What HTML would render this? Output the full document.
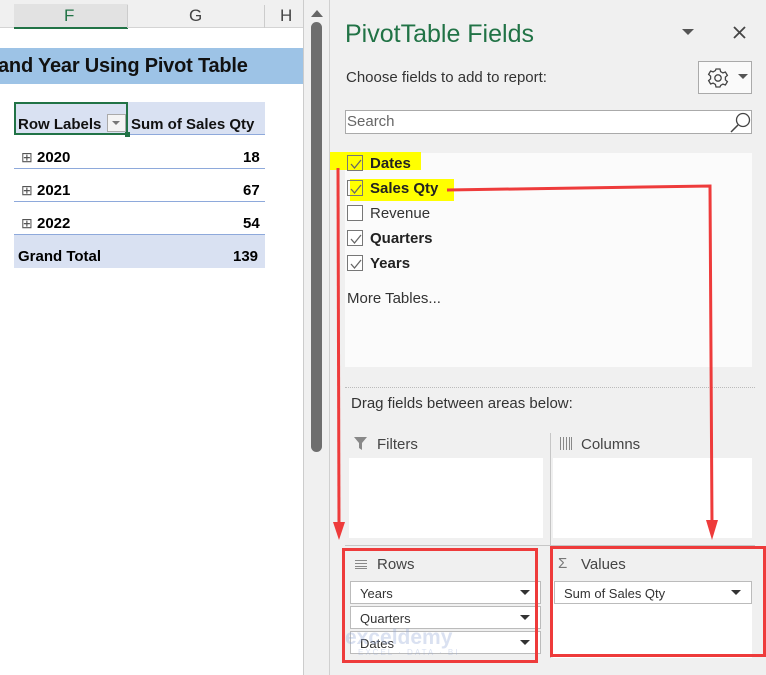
<!DOCTYPE html>
<html><head><meta charset="utf-8"><style>
*{margin:0;padding:0;box-sizing:border-box}
body{width:766px;height:675px;position:relative;overflow:hidden;background:#fff;font-family:"Liberation Sans",Arial,sans-serif}
.a{position:absolute}
.t{position:absolute;white-space:nowrap}
.cb{position:absolute;width:16px;height:16px;border:1px solid #777;background:#fff}
.ck{position:absolute;left:2px;top:2px}
.dd{position:absolute;height:23px;border:1px solid #bbb;background:#fff;font-size:13px;color:#333;padding:4px 0 0 9px}
.dd:after{content:"";position:absolute;right:10px;top:8px;border-left:5px solid transparent;border-right:5px solid transparent;border-top:5px solid #333}
</style></head><body>
<!-- sheet -->
<div class="a" style="left:0;top:0;width:303px;height:28px;background:#f0f0f0;border-bottom:1px solid #d4d4d4"></div>
<div class="a" style="left:14px;top:4px;width:114px;height:25px;background:#e2e2e2;border-bottom:2px solid #217346"></div>
<div class="a" style="left:127px;top:5px;width:1px;height:23px;background:#ccc"></div>
<div class="a" style="left:264px;top:5px;width:1px;height:23px;background:#ccc"></div>
<div class="t" style="left:64px;top:6px;font-size:17px;color:#217346">F</div>
<div class="t" style="left:189px;top:6px;font-size:17px;color:#444">G</div>
<div class="t" style="left:280px;top:6px;font-size:17px;color:#444">H</div>
<div class="a" style="left:0;top:48px;width:303px;height:36px;background:#9dc3e6"></div>
<div class="t" style="left:-2px;top:55px;font-size:20px;font-weight:bold;color:#111;letter-spacing:-0.2px">and Year Using Pivot Table</div>
<div class="a" style="left:14px;top:102px;width:251px;height:33px;background:#d9e1f2;border-bottom:1px solid #8ea9db"></div>
<div class="a" style="left:14px;top:102px;width:114px;height:33px;border:2px solid #217346"></div>
<div class="a" style="left:125px;top:132px;width:5px;height:5px;background:#217346"></div>
<div class="a" style="left:107px;top:114px;width:19px;height:18px;border:1px solid #aaa;background:#f4f4f4"></div>
<div class="a" style="left:112px;top:121px;border-left:4px solid transparent;border-right:4px solid transparent;border-top:4px solid #777"></div>
<div class="t" style="left:18px;top:116px;font-size:15px;font-weight:bold;color:#111">Row Labels</div>
<div class="t" style="left:131px;top:116px;font-size:15px;font-weight:bold;color:#111">Sum of Sales Qty</div>
<div class="a" style="left:14px;top:168px;width:251px;height:1px;background:#8ea9db"></div>
<div class="a" style="left:14px;top:201px;width:251px;height:1px;background:#8ea9db"></div>
<div class="a" style="left:14px;top:234px;width:251px;height:34px;background:#d9e1f2;border-top:1px solid #8ea9db"></div>
<div class="t" style="left:21px;top:149px;font-size:14px;color:#555">⊞</div><div class="t" style="left:37px;top:149px;font-size:15px;font-weight:bold">2020</div><div class="t" style="left:243px;top:149px;font-size:15px;font-weight:bold">18</div>
<div class="t" style="left:21px;top:182px;font-size:14px;color:#555">⊞</div><div class="t" style="left:37px;top:182px;font-size:15px;font-weight:bold">2021</div><div class="t" style="left:243px;top:182px;font-size:15px;font-weight:bold">67</div>
<div class="t" style="left:21px;top:215px;font-size:14px;color:#555">⊞</div><div class="t" style="left:37px;top:215px;font-size:15px;font-weight:bold">2022</div><div class="t" style="left:243px;top:215px;font-size:15px;font-weight:bold">54</div>
<div class="t" style="left:18px;top:248px;font-size:15px;font-weight:bold">Grand Total</div><div class="t" style="left:233px;top:248px;font-size:15px;font-weight:bold">139</div>
<!-- scrollbar -->
<div class="a" style="left:303px;top:0;width:27px;height:675px;background:#f0f0f0;border-left:1px solid #ccc"></div>
<div class="a" style="left:311px;top:10px;border-left:6px solid transparent;border-right:6px solid transparent;border-bottom:7px solid #666"></div>
<div class="a" style="left:311px;top:22px;width:11px;height:430px;background:#6e6e6e;border-radius:6px"></div>
<div class="a" style="left:329px;top:0;width:1px;height:675px;background:#d0d0d0"></div>
<!-- pane -->
<div class="a" style="left:330px;top:0;width:436px;height:675px;background:#f0f0f0"></div>
<div class="t" style="left:345px;top:20px;font-size:25px;color:#217346">PivotTable Fields</div>
<div class="a" style="left:682px;top:29px;border-left:6px solid transparent;border-right:6px solid transparent;border-top:6px solid #555"></div>
<svg class="a" style="left:733px;top:26px" width="13" height="13"><path d="M1 1L12 12M12 1L1 12" stroke="#444" stroke-width="1.8"/></svg>
<div class="t" style="left:346px;top:69px;font-size:15px;color:#333">Choose fields to add to report:</div>
<div class="a" style="left:698px;top:61px;width:54px;height:33px;border:1px solid #aaa;background:#fafafa"></div>
<svg class="a" style="left:707px;top:67px" width="22" height="22" viewBox="0 0 22 22"><path d="M9 2h4l.6 2.6 2.3 1.3 2.5-.9 2 3.4-2 1.8v2.6l2 1.8-2 3.4-2.5-.9-2.3 1.3L13 20H9l-.6-2.6-2.3-1.3-2.5.9-2-3.4 2-1.8V9.2l-2-1.8 2-3.4 2.5.9 2.3-1.3z" fill="none" stroke="#444" stroke-width="1.3"/><circle cx="11" cy="11" r="3.2" fill="none" stroke="#444" stroke-width="1.3"/></svg>
<div class="a" style="left:738px;top:74px;border-left:5px solid transparent;border-right:5px solid transparent;border-top:5px solid #555"></div>
<div class="a" style="left:345px;top:110px;width:407px;height:24px;border:1px solid #aaa;background:#fff"></div>
<div class="t" style="left:347px;top:113px;font-size:15px;color:#666">Search</div>
<svg class="a" style="left:729px;top:110px" width="24" height="24"><circle cx="14" cy="10" r="6.5" fill="none" stroke="#444" stroke-width="1.3"/><line x1="9" y1="15" x2="2" y2="22" stroke="#444" stroke-width="1.5"/></svg>
<div class="a" style="left:345px;top:153px;width:407px;height:214px;background:#fbfbfb"></div>
<div class="a" style="left:330px;top:152px;width:91px;height:18px;background:#ffff00"></div>
<div class="a" style="left:350px;top:179px;width:104px;height:22px;background:#ffff00"></div>
<div class="cb" style="left:347px;top:155px;background:transparent"><svg class="ck" width="12" height="12"><path d="M1 6l3.5 4L11 2" fill="none" stroke="#666" stroke-width="1.3"/></svg></div>
<div class="cb" style="left:347px;top:180px;background:transparent"><svg class="ck" width="12" height="12"><path d="M1 6l3.5 4L11 2" fill="none" stroke="#666" stroke-width="1.3"/></svg></div>
<div class="cb" style="left:347px;top:205px"></div>
<div class="cb" style="left:347px;top:230px"><svg class="ck" width="12" height="12"><path d="M1 6l3.5 4L11 2" fill="none" stroke="#666" stroke-width="1.3"/></svg></div>
<div class="cb" style="left:347px;top:255px"><svg class="ck" width="12" height="12"><path d="M1 6l3.5 4L11 2" fill="none" stroke="#666" stroke-width="1.3"/></svg></div>
<div class="t" style="left:370px;top:155px;font-size:15px;font-weight:bold;color:#222">Dates</div>
<div class="t" style="left:370px;top:180px;font-size:15px;font-weight:bold;color:#222">Sales Qty</div>
<div class="t" style="left:370px;top:205px;font-size:15px;color:#333">Revenue</div>
<div class="t" style="left:370px;top:230px;font-size:15px;font-weight:bold;color:#222">Quarters</div>
<div class="t" style="left:370px;top:255px;font-size:15px;font-weight:bold;color:#222">Years</div>
<div class="t" style="left:347px;top:290px;font-size:15px;color:#333">More Tables...</div>
<div class="a" style="left:345px;top:387px;width:410px;border-top:1px dotted #bbb"></div>
<div class="t" style="left:351px;top:395px;font-size:15px;color:#333">Drag fields between areas below:</div>
<svg class="a" style="left:353px;top:436px" width="16" height="16"><path d="M1 1h13l-5 6v7l-3-2V7z" fill="#888"/></svg>
<svg class="a" style="left:559px;top:437px" width="14" height="13"><g stroke="#888" stroke-width="1"><line x1="1.5" y1="0" x2="1.5" y2="13"/><line x1="4.5" y1="0" x2="4.5" y2="13"/><line x1="7.5" y1="0" x2="7.5" y2="13"/><line x1="10.5" y1="0" x2="10.5" y2="13"/><line x1="12.5" y1="0" x2="12.5" y2="13"/></g></svg>
<div class="t" style="left:377px;top:436px;font-size:15px;color:#444">Filters</div>
<div class="t" style="left:581px;top:436px;font-size:15px;color:#444">Columns</div>
<div class="a" style="left:349px;top:458px;width:194px;height:80px;background:#fff"></div>
<div class="a" style="left:553px;top:458px;width:199px;height:80px;background:#fff"></div>
<div class="a" style="left:550px;top:433px;width:1px;height:225px;background:#c6c6c6"></div>
<div class="a" style="left:345px;top:545px;width:410px;height:1px;background:#c6c6c6"></div>
<svg class="a" style="left:355px;top:559px" width="12" height="10"><g stroke="#888" stroke-width="1"><line x1="0" y1="1.5" x2="12" y2="1.5"/><line x1="0" y1="4.5" x2="12" y2="4.5"/><line x1="0" y1="7.5" x2="12" y2="7.5"/><line x1="0" y1="9.5" x2="12" y2="9.5"/></g></svg>
<div class="t" style="left:377px;top:556px;font-size:15px;color:#444">Rows</div>
<div class="t" style="left:558px;top:555px;font-size:15px;color:#777">Σ</div>
<div class="t" style="left:581px;top:556px;font-size:15px;color:#444">Values</div>
<div class="dd" style="left:350px;top:581px;width:191px">Years</div>
<div class="dd" style="left:350px;top:606px;width:191px">Quarters</div>
<div class="dd" style="left:350px;top:631px;width:191px">Dates</div>
<div class="a" style="left:553px;top:581px;width:199px;height:77px;background:#fff"></div>
<div class="dd" style="left:554px;top:581px;width:198px">Sum of Sales Qty</div>
<div class="t" style="left:345px;top:626px;font-size:21px;font-weight:bold;color:rgba(150,170,215,.35)">exceldemy</div>
<div class="t" style="left:358px;top:648px;font-size:8px;letter-spacing:2px;color:rgba(150,170,215,.35)">EXCEL · DATA · BI</div>
<!-- red annotations -->
<div class="a" style="left:342px;top:548px;width:196px;height:115px;border:3px solid #ee3b3b"></div>
<div class="a" style="left:550px;top:546px;width:216px;height:111px;border:3px solid #ee3b3b"></div>
<svg class="a" style="left:0;top:0" width="766" height="675">
<line x1="338" y1="168" x2="339" y2="525" stroke="#ee3b3b" stroke-width="3"/>
<path d="M333 522 L339 540 L345 522 Z" fill="#ee3b3b"/>
<polyline points="447,190 710,186 712,525" fill="none" stroke="#ee3b3b" stroke-width="3"/>
<path d="M706 520 L712 540 L718 520 Z" fill="#ee3b3b"/>
</svg>
</body></html>
